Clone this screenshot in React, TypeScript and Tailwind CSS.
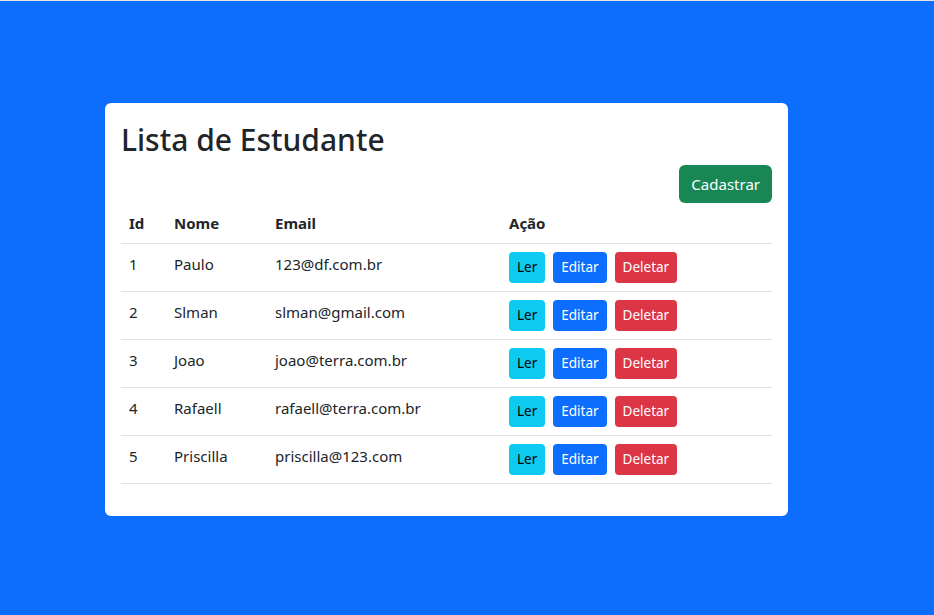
const students = [
  { id: 1, nome: 'Paulo', email: '123@df.com.br' },
  { id: 2, nome: 'Slman', email: 'slman@gmail.com' },
  { id: 3, nome: 'Joao', email: 'joao@terra.com.br' },
  { id: 4, nome: 'Rafaell', email: 'rafaell@terra.com.br' },
  { id: 5, nome: 'Priscilla', email: 'priscilla@123.com' },
];

export default function App() {
  return (
    <div className="min-h-screen bg-[#0d6efd] border-t border-[#e4e4e4] flex items-center pl-[105px] font-['Noto_Sans',sans-serif] text-[#212529]">
      <div className="w-[683px] bg-white rounded-md p-4 mt-[3px]">
        <h1 className="text-[30px] leading-[38px] font-medium pt-[2px] mb-[6px]">Lista de Estudante</h1>
        <div className="flex justify-end">
          <button className="h-[38px] px-3 rounded-md bg-[#198754] text-white text-[15px]">Cadastrar</button>
        </div>
        <table className="w-full mb-4 text-[15px] border-collapse">
          <thead>
            <tr className="border-b border-[#dee2e6]">
              <th className="w-[45px] text-left px-2 h-10 font-bold">Id</th>
              <th className="w-[101px] text-left px-2 font-bold">Nome</th>
              <th className="w-[234px] text-left px-2 font-bold">Email</th>
              <th className="text-left px-2 font-bold">Ação</th>
            </tr>
          </thead>
          <tbody>
            {students.map((s) => (
              <tr key={s.id} className="border-b border-[#dee2e6]">
                <td className="px-2 align-top pt-[9px]">{s.id}</td>
                <td className="px-2 align-top pt-[9px]">{s.nome}</td>
                <td className="px-2 align-top pt-[9px]">{s.email}</td>
                <td className="px-2 py-2">
                  <div className="flex gap-2">
                    <button className="h-[31px] px-2 rounded bg-[#0dcaf0] text-black text-[13.5px]">Ler</button>
                    <button className="h-[31px] px-2 rounded bg-[#0d6efd] text-white text-[13.5px]">Editar</button>
                    <button className="h-[31px] px-2 rounded bg-[#dc3545] text-white text-[13.5px]">Deletar</button>
                  </div>
                </td>
              </tr>
            ))}
          </tbody>
        </table>
      </div>
    </div>
  );
}
